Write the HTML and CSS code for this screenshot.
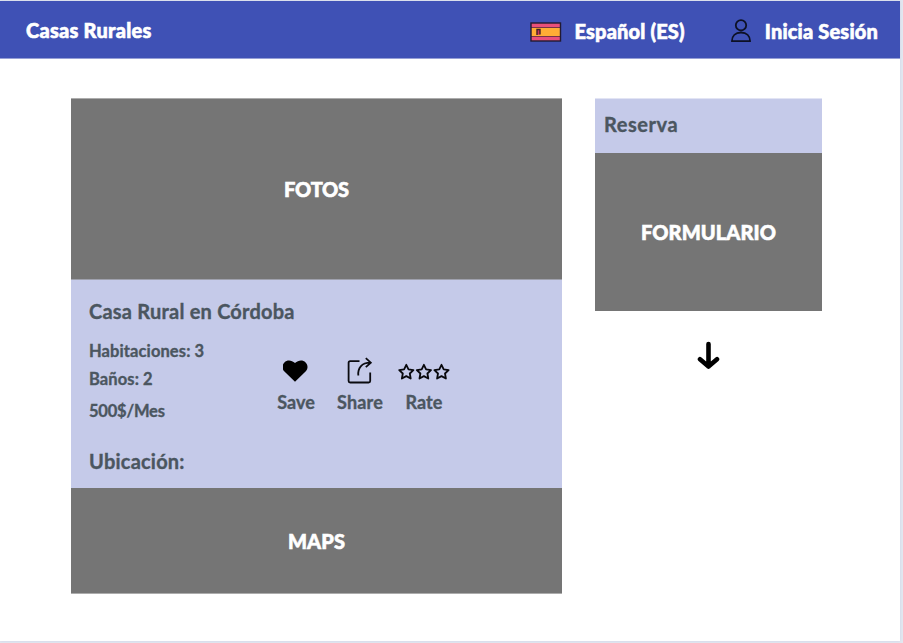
FILE: index.html
```html
<!DOCTYPE html>
<html lang="es">
<head>
<meta charset="utf-8">
<title>Casas Rurales</title>
<link rel="stylesheet" href="styles.css">
</head>
<body>
<div class="page">
  <header class="topbar">
    <span class="brand">Casas Rurales</span>
    <div class="language">
      <svg class="flag" width="32" height="20" viewBox="0 0 32 20">
        <rect x="1" y="1" width="29.500" height="18" fill="#e9507a"/>
        <rect x="1" y="5.500" width="29.500" height="9" fill="#ffad35"/>
        <path d="M1 5.500H30M1 14.500H30" stroke="#783447" stroke-width="1.2"/>
        <rect x="1" y="1" width="29.500" height="18" fill="none" stroke="#221a32" stroke-width="1.4"/>
        <path d="M7 13V7.500H10V12.500" fill="#c8395f" stroke="#402027" stroke-width="1.4"/>
      </svg>
      <span>Español (ES)</span>
    </div>
    <div class="login">
      <svg class="user" width="20" height="24" viewBox="0 0 20 24" fill="none" stroke="#0d1125" stroke-width="1.8">
        <circle cx="10" cy="6.3" r="5.2"/>
        <path d="M.9 22.2H19.1C19.1 16.800 15.500 13.500 10 13.500S.9 16.800 .9 22.200Z" stroke-linejoin="round"/>
      </svg>
      <span>Inicia Sesión</span>
    </div>
  </header>
  <main class="content">
    <section class="listing">
      <div class="placeholder photos">FOTOS</div>
      <div class="details">
        <h1>Casa Rural en Córdoba</h1>
        <div class="info">
          <div class="facts">
            <p>Habitaciones: 3</p>
            <p>Baños: 2</p>
            <p class="price">500$/Mes</p>
          </div>
          <div class="actions">
            <div class="action save">
              <svg width="26" height="28" viewBox="0 0 26 28"><path d="M12 24.800L1.200 14.300C-1.400 11.500 -.8 7.500 1.400 5.400C4.200 2.600 8.500 2.900 12 6C15.500 2.900 19.800 2.600 22.600 5.400C24.800 7.500 25.400 11.500 22.800 14.300Z"/></svg>
              <span>Save</span>
            </div>
            <div class="action share">
              <svg width="26" height="28" viewBox="0 0 26 28" fill="none" stroke="#0b0b10" stroke-width="1.8"><path d="M12.500 4.200H3.200Q1.600 4.200 1.600 5.800V24Q1.600 25.500 3.200 25.500H21.600Q23.200 25.500 23.200 24V15.500M11.300 18.500C10.600 11 14.500 5.700 23.500 5.700M18.800 1.200L23.800 5.700L18.800 10.200"/></svg>
              <span>Share</span>
            </div>
            <div class="action rate">
              <svg width="52" height="28" viewBox="0 0 52 28" fill="none" stroke="#08080c" stroke-width="1.8" stroke-linejoin="round">
                <path id="star" d="M8.300 7.800L10.500 12.400L15.400 13.100L11.800 16.500L12.700 21.500L8.300 19.100L3.900 21.500L4.800 16.500L1.200 13.100L6.100 12.400Z"/>
                <use href="#star" x="17.600"/><use href="#star" x="35.200"/>
              </svg>
              <span>Rate</span>
            </div>
          </div>
        </div>
        <h2>Ubicación:</h2>
      </div>
      <div class="placeholder maps">MAPS</div>
    </section>
    <aside class="booking">
      <h2>Reserva</h2>
      <div class="placeholder form">FORMULARIO</div>
      <svg class="arrow" width="24" height="30" viewBox="0 0 24 30" fill="none" stroke="#000" stroke-width="4.600" stroke-linecap="round" stroke-linejoin="round"><path d="M11.500 3V25.500M3 18.300L11.500 25.500L20 18.300"/></svg>
    </aside>
  </main>
</div>
</body>
</html>
```
FILE: styles.css
```css
* { box-sizing: border-box; }
body {
  margin: 0;
  height: 643px;
  padding-top: 1px;
  overflow: hidden;
  background: #e3e7f0;
  font-family: Lato, sans-serif;
  font-weight: 700;
  color: #4b5660;
}
.page { width: 900px; height: 640px; background: #fff; box-shadow: 0 0 3px #cdd3e4; }
.topbar {
  display: flex;
  align-items: center;
  height: 58px;
  padding: 2px 22px 0 26px;
  background: #3f51b5;
  border-bottom: 1px solid #969fd6;
  color: #fff;
  font-size: 20px;
  font-weight: 900;
  -webkit-text-stroke: .6px #fff;
}
.topbar span { line-height: 24px; }
.topbar .brand { margin-bottom: 2px; letter-spacing: .25px; }
.language, .login { display: flex; align-items: center; letter-spacing: .17px; }
.language { margin-left: auto; gap: 13px; }
.login { margin-left: 46px; gap: 14px; }
.flag { margin-top: 2px; }
.content { display: flex; align-items: flex-start; gap: 33px; padding: 39px 0 0 71px; }
.listing { width: 491px; }
.placeholder {
  display: flex;
  align-items: center;
  justify-content: center;
  background: #757575;
  color: #fff;
  font-size: 20px;
  font-weight: 900;
  -webkit-text-stroke: .6px #fff;
}
.photos { height: 181px; border-top: 1px solid #acacac; letter-spacing: -.2px; }
.maps { height: 106px; border-bottom: 1px solid #acacac; letter-spacing: .1px; }
.form { height: 158px; letter-spacing: .1px; }
h1, h2, p { margin: 0; }
h1, h2 { font-size: 20px; line-height: 24px; font-weight: 700; letter-spacing: .22px; -webkit-text-stroke: .35px #4b5660; }
.details { height: 209px; padding: 19px 18px 0; border-top: 1px solid #9fa1ad; background: #c5cae9; -webkit-text-stroke: .35px #4b5660; }
.info { display: flex; height: 126px; }
.facts { width: 189px; padding-top: 18px; font-size: 16.5px; letter-spacing: .1px; }
.facts p { height: 28px; line-height: 20px; }
.facts .price { margin-top: 4px; letter-spacing: -.2px; }
.actions { display: flex; padding-top: 34px; font-size: 18px; line-height: 24px; }
.action { display: flex; flex-direction: column; align-items: center; gap: 5px; }
.action svg { display: block; }
.save { width: 36px; }
.save span { letter-spacing: .05px; }
.share { width: 46px; margin-left: 23px; letter-spacing: .15px; }
.rate { width: 52px; margin-left: 15px; letter-spacing: .1px; }
.booking { width: 227px; display: flex; flex-direction: column; }
.booking h2 { height: 55px; padding: 13px 9px; background: #c5cae9; border-top: 1px solid #e2e4f4; letter-spacing: .55px; }
.arrow { margin: 30px auto 0; }
```
